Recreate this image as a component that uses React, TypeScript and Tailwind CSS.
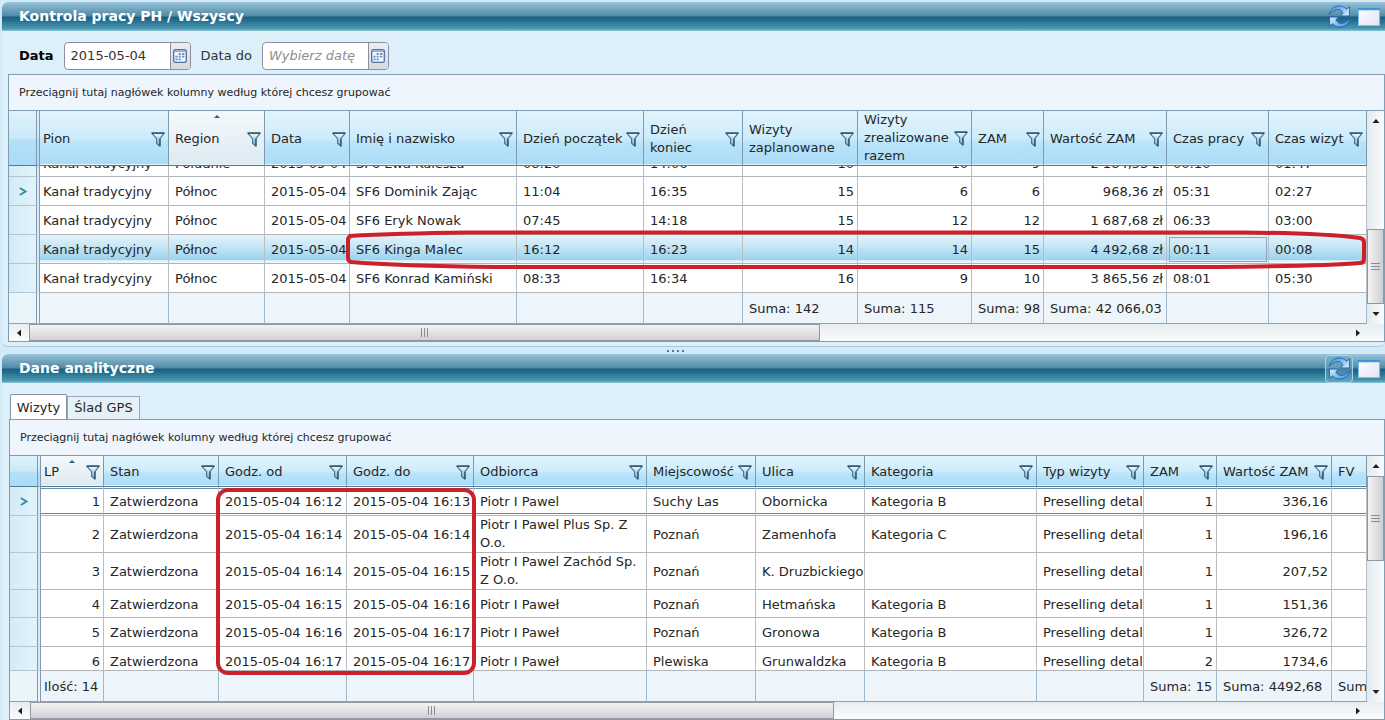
import React from "react";

type Col = {
  label: string;
  width: string;
  right?: boolean;
  sorted?: boolean;
  noFilter?: boolean;
};

const visitCols: Col[] = [
  { label: "Pion", width: "w-[129px]" },
  { label: "Region", width: "w-[96px]", sorted: true },
  { label: "Data", width: "w-[85px]" },
  { label: "Imię i nazwisko", width: "w-[167px]" },
  { label: "Dzień początek", width: "w-[127px]" },
  { label: "Dzień koniec", width: "w-[99px]" },
  { label: "Wizyty zaplanowane", width: "w-[115px]", right: true },
  { label: "Wizyty zrealizowane razem", width: "w-[114px]", right: true },
  { label: "ZAM", width: "w-[72px]", right: true },
  { label: "Wartość ZAM", width: "w-[123px]", right: true },
  { label: "Czas pracy", width: "w-[102px]" },
  { label: "Czas wizyt", width: "w-auto" },
];

const clippedVisit = ["Kanał tradycyjny", "Południe", "2015-05-04", "SF6 Ewa Kulesza", "08:20", "14:06", "10", "10", "9", "2 184,53 zł", "00:10", "01:47"];

const visits = [
  ["Kanał tradycyjny", "Północ", "2015-05-04", "SF6 Dominik Zając", "11:04", "16:35", "15", "6", "6", "968,36 zł", "05:31", "02:27"],
  ["Kanał tradycyjny", "Północ", "2015-05-04", "SF6 Eryk Nowak", "07:45", "14:18", "15", "12", "12", "1 687,68 zł", "06:33", "03:00"],
  ["Kanał tradycyjny", "Północ", "2015-05-04", "SF6 Kinga Malec", "16:12", "16:23", "14", "14", "15", "4 492,68 zł", "00:11", "00:08"],
  ["Kanał tradycyjny", "Północ", "2015-05-04", "SF6 Konrad Kamiński", "08:33", "16:34", "16", "9", "10", "3 865,56 zł", "08:01", "05:30"],
];

const visitTotals = ["", "", "", "", "", "", "Suma: 142", "Suma: 115", "Suma: 98", "Suma: 42 066,03", "", ""];

const detailCols: Col[] = [
  { label: "LP", width: "w-[63px]", right: true, sorted: true },
  { label: "Stan", width: "w-[115px]" },
  { label: "Godz. od", width: "w-[128px]" },
  { label: "Godz. do", width: "w-[127px]" },
  { label: "Odbiorca", width: "w-[173px]" },
  { label: "Miejscowość", width: "w-[109px]" },
  { label: "Ulica", width: "w-[109px]" },
  { label: "Kategoria", width: "w-[172px]" },
  { label: "Typ wizyty", width: "w-[107px]" },
  { label: "ZAM", width: "w-[73px]", right: true },
  { label: "Wartość ZAM", width: "w-[115px]", right: true },
  { label: "FV", width: "w-auto", noFilter: true },
];

const details = [
  ["1", "Zatwierdzona", "2015-05-04 16:12", "2015-05-04 16:13", "Piotr I Pawel", "Suchy Las", "Obornicka", "Kategoria B", "Preselling detal", "1", "336,16", ""],
  ["2", "Zatwierdzona", "2015-05-04 16:14", "2015-05-04 16:14", "Piotr I Pawel Plus Sp. Z O.o.", "Poznań", "Zamenhofa", "Kategoria C", "Preselling detal", "1", "196,16", ""],
  ["3", "Zatwierdzona", "2015-05-04 16:14", "2015-05-04 16:15", "Piotr I Pawel Zachód Sp. Z O.o.", "Poznań", "K. Druzbickiego", "", "Preselling detal", "1", "207,52", ""],
  ["4", "Zatwierdzona", "2015-05-04 16:15", "2015-05-04 16:16", "Piotr I Paweł", "Poznań", "Hetmańska", "Kategoria B", "Preselling detal", "1", "151,36", ""],
  ["5", "Zatwierdzona", "2015-05-04 16:16", "2015-05-04 16:17", "Piotr I Paweł", "Poznań", "Gronowa", "Kategoria B", "Preselling detal", "1", "326,72", ""],
];

const clippedDetail = ["6", "Zatwierdzona", "2015-05-04 16:17", "2015-05-04 16:17", "Piotr I Paweł", "Plewiska", "Grunwaldzka", "Kategoria B", "Preselling detal", "2", "1734,6", ""];

const detailTotals = ["Ilość: 14", "", "", "", "", "", "", "", "", "Suma: 15", "Suma: 4492,68", "Suma: 0"];

function FunnelIcon() {
  return (
    <svg viewBox="0 0 15 16" className="h-[15px] w-[14px]" aria-hidden="true">
      <path d="M0.8 1.2H14.2L9.6 7V15.2L6 12.2V7Z" fill="url(#funnel)" stroke="#3f7590" strokeWidth="1.2" strokeLinejoin="round" />
      <path d="M0.8 1.2H14.2M9.6 7.2V15" fill="none" stroke="#244a5e" strokeWidth="1.2" />
    </svg>
  );
}

function RefreshIcon() {
  const arrow = "M1.4 9.6C2.4 4 6.8 1 11.4 1C14.8 1 17.4 2.2 19.2 4.4L22.4 2V11.4H13L15.8 8.4C14.4 6 12.4 4.6 9.8 4.8C6.4 5 4.4 6.8 1.4 9.6Z";
  return (
    <svg viewBox="0 0 24 24" className="h-[23px] w-[23px]" aria-hidden="true">
      <path d={arrow} fill="url(#arrow)" stroke="#1f5ea8" strokeWidth="0.9" strokeLinejoin="round" />
      <path d={arrow} transform="rotate(180 12 12)" fill="url(#arrow)" stroke="#1f5ea8" strokeWidth="0.9" strokeLinejoin="round" />
    </svg>
  );
}

function WindowIcon() {
  return (
    <svg viewBox="0 0 22 18" className="h-[18px] w-[22px]" aria-hidden="true">
      <rect x="0.5" y="0.5" width="21" height="17" fill="url(#pane)" stroke="#7cc0ee" />
      <rect x="0" y="0" width="22" height="2.4" fill="#3d93dc" />
      <rect x="1" y="2.4" width="20" height="1" fill="#d9effc" />
    </svg>
  );
}

function CalendarIcon() {
  return (
    <svg viewBox="0 0 14 14" className="h-[14px] w-[14px]" aria-hidden="true">
      <rect x="0.7" y="0.7" width="12.6" height="12.6" rx="1.6" fill="#f4f8fd" stroke="#4a6fa5" strokeWidth="1.3" />
      <path d="M1.2 2.2H12.8" stroke="#86a6d0" strokeWidth="1.4" />
      <path d="M5.6 5H7.8M9 5H11.4M2.4 7.6H4.6M5.6 7.6H7.8M9 7.6H11.4M2.4 10.4H4.6M5.6 10.4H7.8" stroke="#6d93c6" strokeWidth="1.8" />
    </svg>
  );
}

function Defs() {
  return (
    <svg className="absolute h-0 w-0" aria-hidden="true">
      <defs>
        <linearGradient id="funnel" x1="0" y1="0" x2="0" y2="1">
          <stop offset="0" stopColor="#f4fbff" />
          <stop offset="1" stopColor="#6aa6d6" />
        </linearGradient>
        <linearGradient id="arrow" x1="0" y1="0" x2="1" y2="0.6">
          <stop offset="0" stopColor="#3f8cdc" />
          <stop offset="0.5" stopColor="#6fb2f2" />
          <stop offset="1" stopColor="#c2e4ff" />
        </linearGradient>
        <linearGradient id="pane" x1="0" y1="0" x2="1" y2="1">
          <stop offset="0" stopColor="#ffffff" />
          <stop offset="1" stopColor="#e0e2f8" />
        </linearGradient>
      </defs>
    </svg>
  );
}

function TitleBar({ title, framed }: { title: string; framed?: boolean }) {
  return (
    <header className="flex h-[29px] items-center justify-between rounded-tl-md bg-[linear-gradient(to_bottom,#9cc6dc_0%,#86b3cb_12%,#4f8ba9_48%,#1a5f80_52%,#24708f_65%,#4d98b2_92%,#8dc3d6_100%)] pr-1 pl-[17px]">
      <h2 className="text-[14px] font-bold text-white">{title}</h2>
      <div className="flex items-center gap-1">
        <button
          aria-label="Odśwież"
          className={framed ? "flex h-7 w-7 items-center justify-center rounded-sm border border-[#a5d3e8] bg-[#6fa9c5]/50" : "flex h-7 w-7 items-center justify-center"}
        >
          <RefreshIcon />
        </button>
        <button aria-label="Maksymalizuj" className="flex h-7 w-6 items-center justify-center">
          <WindowIcon />
        </button>
      </div>
    </header>
  );
}

function DateField({ id, value, placeholder }: { id: string; value?: string; placeholder?: string }) {
  return (
    <div className="flex h-7 w-[127px] overflow-hidden rounded-sm border border-[#8b8fa3] bg-white">
      <input
        id={id}
        type="text"
        defaultValue={value}
        placeholder={placeholder}
        className="w-0 flex-1 pl-1.5 text-[13px] text-[#333] outline-none placeholder:text-[#8e8e8e] placeholder:italic"
      />
      <button aria-label="Otwórz kalendarz" className="flex w-5 items-center justify-center border-l border-[#8b8fa3] bg-linear-to-b from-[#eceef1] to-[#d6d9de]">
        <CalendarIcon />
      </button>
    </div>
  );
}

function Arrow({ d, label, className }: { d: string; label: string; className: string }) {
  return (
    <button aria-label={label} className={className}>
      <svg viewBox="0 0 8 8" className="h-2 w-2" aria-hidden="true">
        <path d={d} fill="#1d1d1d" />
      </svg>
    </button>
  );
}

function VerticalScroll({ atEnd }: { atEnd?: boolean }) {
  return (
    <div className="flex w-[17px] shrink-0 flex-col bg-linear-to-r from-[#e3eaee] to-[#fafcfd]">
      <Arrow d="M0.5 6L4 2L7.5 6Z" label="W górę" className="flex h-5 items-center justify-center" />
      {atEnd && <div className="flex-1" />}
      <div className={(atEnd ? "h-[75px]" : "h-[85px]") + " flex flex-col items-center justify-center gap-0.5 border border-[#8f98a3] bg-linear-to-r from-[#f4f4f5] to-[#cfcfd3]"}>
        <i className="h-px w-[9px] bg-[#8b8b91]" />
        <i className="h-px w-[9px] bg-[#8b8b91]" />
        <i className="h-px w-[9px] bg-[#8b8b91]" />
      </div>
      {!atEnd && <div className="flex-1" />}
      <Arrow d="M0.5 2L4 6L7.5 2Z" label="W dół" className="flex h-5 items-center justify-center" />
    </div>
  );
}

function HorizontalScroll({ thumb }: { thumb: string }) {
  return (
    <div className="flex h-[17px] bg-linear-to-b from-[#e6edf0] to-[#fbfcfd]">
      <Arrow d="M6 0.5L2 4L6 7.5Z" label="W lewo" className="flex w-5 items-center justify-center" />
      <div className="flex-1">
        <div className={thumb + " flex h-[17px] items-center justify-center gap-0.5 border border-[#8f98a3] bg-linear-to-b from-[#f4f3f4] to-[#d3d0d3]"}>
          <i className="h-[9px] w-px bg-[#8b8b91]" />
          <i className="h-[9px] w-px bg-[#8b8b91]" />
          <i className="h-[9px] w-px bg-[#8b8b91]" />
        </div>
      </div>
      <Arrow d="M2 0.5L6 4L2 7.5Z" label="W prawo" className="mr-4 flex w-5 items-center justify-center" />
    </div>
  );
}

const gutter = "border-r-4 border-double border-r-[#8496b2]";

function HeadRow({ cols, height }: { cols: Col[]; height: string }) {
  return (
    <thead>
      <tr className={height}>
        <td className={gutter + " border-b border-b-[#55798d] bg-[linear-gradient(to_bottom,#dff2fb_0%,#cbe9f8_50%,#b4e0f7_54%,#a8dcf8_100%)]"} />
        {cols.map((c, i) => (
          <th
            key={c.label}
            scope="col"
            className={
              (i === 0 ? "pl-[3px] " : "pl-1.5 ") +
              (c.label.length > 20 ? "pt-0 " : "pt-0.5 ") +
              (c.sorted
                ? "bg-[linear-gradient(to_bottom,#f4f9fc_0%,#e6f0f6_60%,#dceaf2_100%)] "
                : "bg-[linear-gradient(to_bottom,#e2f4fc_0%,#cdecfb_50%,#b9e3f9_60%,#aadcf8_100%)] ") +
              "relative border-r border-b border-r-[#7d9bae] border-b-[#55798d] pr-[3px] pb-0 text-left font-normal shadow-[inset_0_-1px_0_#e4f5fd]"
            }
          >
            {c.sorted && (
              <svg viewBox="0 0 6 3" className="absolute top-1 left-1/2 h-[3px] w-1.5 -translate-x-1/2" aria-hidden="true">
                <path d="M0 3L3 0L6 3Z" fill="#2c5f86" />
              </svg>
            )}
            <span className="flex items-center justify-between">
              <span>{c.label}</span>
              {!c.noFilter && (
                <button aria-label={"Filtruj: " + c.label} className="shrink-0">
                  <FunnelIcon />
                </button>
              )}
            </span>
          </th>
        ))}
      </tr>
    </thead>
  );
}

function Pointer() {
  return (
    <svg viewBox="0 0 8 9" className="mx-auto h-[9px] w-2" aria-hidden="true">
      <path d="M0.8 1L6.6 4.5L0.8 8" fill="none" stroke="#3787a5" strokeWidth="1.8" />
    </svg>
  );
}

type RowProps = {
  cells: string[];
  cols: Col[];
  height: string;
  pointer?: boolean;
  selected?: boolean;
  current?: boolean;
  clip?: string;
  focusCell?: number;
};

function Row({ cells, cols, height, pointer, selected, current, clip, focusCell }: RowProps) {
  return (
    <tr className={height}>
      <td className={gutter + " border-b border-b-[#b4c6d2] bg-linear-to-r from-[#d3ebf6] to-[#e3f3fa]"}>{pointer && <Pointer />}</td>
      {cells.map((text, i) => (
        <td
          key={i}
          className={
            (i === 0 ? "pl-[3px] " : "pl-1.5 ") +
            (cols[i].right ? "pr-[3px] text-right " : "pr-0 ") +
            (text.length > 20 ? "whitespace-normal " : "whitespace-nowrap ") +
            (clip || text.length > 20 ? "pt-0 " : "pt-0.5 ") +
            (selected ? "bg-[linear-gradient(to_bottom,#e4f3fa_0%,#cbe8f6_35%,#9bd3ef_88%,#eaf6fb_92%)] " : "bg-white ") +
            (current ? "shadow-[inset_0_1px_0_#ffffff,inset_0_2px_0_#6b91ad,inset_0_-1px_0_#ffffff,inset_0_-2px_0_#5d87a8] " : "") +
            (focusCell === i ? "outline-1 -outline-offset-3 outline-[#83a9c4] outline-solid " : "") +
            "border-r border-b border-r-[#b9bec4] border-b-[#b2b6bb] pb-0"
          }
        >
          {clip ? <div className={clip + (cols[i].right ? " justify-end" : "")}>{text}</div> : text}
        </td>
      ))}
    </tr>
  );
}

function TotalsRow({ cells }: { cells: string[] }) {
  return (
    <tfoot>
      <tr className="h-[31px]">
        <td className={gutter + " border-b border-b-[#8aa5bb] bg-[#eaf5fb]"} />
        {cells.map((text, i) => (
          <td
            key={i}
            className={(i === 0 ? "pl-[3px]" : "pl-1.5") + " overflow-hidden border-r border-b border-r-[#9fb9ce] border-b-[#8aa5bb] bg-[#edf5fb] pt-0.5 pr-0 pb-0 whitespace-nowrap"}
          >
            {text}
          </td>
        ))}
      </tr>
    </tfoot>
  );
}

function GridTable({ cols, children }: { cols: Col[]; children: React.ReactNode }) {
  return (
    <table className="w-full table-fixed border-separate border-spacing-0 text-[13px] leading-[18px] text-[#262626]">
      <colgroup>
        <col className="w-[31px]" />
        {cols.map((c) => (
          <col key={c.label} className={c.width} />
        ))}
      </colgroup>
      {children}
    </table>
  );
}

function GroupBar() {
  return (
    <div className="flex h-9 items-center border-b border-[#7f9db5] bg-[#eef5fc] pt-0.5 pl-2.5 text-[11px] text-[#262626]">
      Przeciągnij tutaj nagłówek kolumny według której chcesz grupować
    </div>
  );
}

export default function App() {
  return (
    <main className="overflow-hidden bg-[#d2e9f7] pt-0.5 pl-0.5 font-['DejaVu_Sans',Verdana,sans-serif]">
      <Defs />
      <section className="rounded-b-md border-b border-[#a9c9de] bg-[#ddf0f9] pb-1">
        <TitleBar title="Kontrola pracy PH / Wszyscy" />
        <form className="flex h-[43px] items-center gap-2.5 pt-2.5 pb-1 pl-[17px] text-[13px] text-[#333]">
          <label htmlFor="date-from" className="font-bold text-black">Data</label>
          <DateField id="date-from" value="2015-05-04" />
          <label htmlFor="date-to">Data do</label>
          <DateField id="date-to" placeholder="Wybierz datę" />
        </form>
        <div className="ml-1.5 border border-[#7f9db5]">
          <GroupBar />
          <div className="relative flex">
            <div className="min-w-0 flex-1 overflow-hidden">
              <GridTable cols={visitCols}>
                <HeadRow cols={visitCols} height="h-[55px]" />
                <tbody>
                  <Row cells={clippedVisit} cols={visitCols} height="h-[11px]" clip="flex h-2.5 items-end overflow-hidden leading-[25px]" />
                  {visits.map((r, i) => (
                    <Row key={i} cells={r} cols={visitCols} height="h-[29px]" pointer={i === 0} selected={i === 2} focusCell={i === 2 ? 10 : undefined} />
                  ))}
                </tbody>
                <TotalsRow cells={visitTotals} />
              </GridTable>
            </div>
            <VerticalScroll atEnd />
            <svg viewBox="0 0 1020 40" preserveAspectRatio="none" className="pointer-events-none absolute top-[118px] right-[18px] left-[337px] h-10 w-[calc(100%-355px)]" aria-hidden="true">
              <path
                d="M3 7C40 5 80 4 120 3.5H900C950 4 990 6 1014 9Q1018 10 1018 13V30Q1018 34 1014 34C980 37 930 37.5 870 38H150C100 37.5 40 36 5 33Q2 32 2 29V11Q2 8 5 7"
                fill="none"
                stroke="#cb212b"
                strokeWidth="4"
                strokeLinejoin="round"
                vectorEffect="non-scaling-stroke"
              />
            </svg>
          </div>
          <HorizontalScroll thumb="w-[60%]" />
        </div>
      </section>

      <div role="separator" className="flex h-[7px] items-center justify-center gap-[3px] pr-9">
        <i className="h-0.5 w-0.5 bg-[#56788d]" />
        <i className="h-0.5 w-0.5 bg-[#56788d]" />
        <i className="h-0.5 w-0.5 bg-[#56788d]" />
        <i className="h-0.5 w-0.5 bg-[#56788d]" />
      </div>

      <section className="bg-[#ddf0f9] pb-0.5">
        <TitleBar title="Dane analityczne" framed />
        <div role="tablist" className="flex h-9 items-end pl-2 text-[13px] text-[#262626]">
          <button role="tab" aria-selected="true" className="h-[25px] w-[57px] rounded-t-xs border border-b-0 border-[#8593a3] bg-white pt-0.5">
            Wizyty
          </button>
          <button role="tab" aria-selected="false" className="h-[23px] w-[73px] border border-b-0 border-[#9aa8b6] bg-[#e4f1f9] whitespace-nowrap">
            Ślad GPS
          </button>
        </div>
        <div className="ml-[7px] border border-[#7f9db5]">
          <GroupBar />
          <div className="relative flex">
            <div className="min-w-0 flex-1 overflow-hidden">
              <GridTable cols={detailCols}>
                <HeadRow cols={detailCols} height="h-[31px]" />
                <tbody>
                  {details.map((r, i) => (
                    <Row key={i} cells={r} cols={detailCols} height={i === 3 ? "h-[28px]" : "h-[29px]"} pointer={i === 0} current={i === 0} />
                  ))}
                  <Row cells={clippedDetail} cols={detailCols} height="h-6" clip="flex h-[23px] items-start overflow-hidden leading-[30px]" />
                </tbody>
                <TotalsRow cells={detailTotals} />
              </GridTable>
            </div>
            <VerticalScroll />
            <div className="pointer-events-none absolute top-8 left-[206px] h-[187px] w-[260px] rounded-xl border-4 border-[#cb212b]" />
          </div>
          <HorizontalScroll thumb="w-[61%]" />
        </div>
      </section>
    </main>
  );
}
